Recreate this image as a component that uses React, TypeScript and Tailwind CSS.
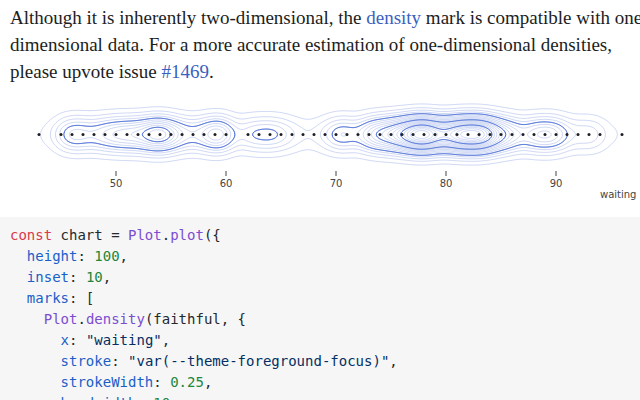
import React from "react";

// faithful.waiting, value -> count
const waiting: [number, number][] = [
  [43, 1], [45, 3], [46, 5], [47, 4], [48, 3], [49, 5], [50, 5], [51, 6], [52, 5], [53, 7],
  [54, 9], [55, 6], [56, 4], [57, 3], [58, 4], [59, 7], [60, 6], [62, 4], [63, 3], [64, 4],
  [65, 3], [66, 2], [67, 1], [68, 1], [69, 2], [70, 4], [71, 5], [72, 1], [73, 7], [74, 6],
  [75, 8], [76, 9], [77, 12], [78, 15], [79, 10], [80, 8], [81, 13], [82, 12], [83, 14], [84, 10],
  [85, 6], [86, 6], [87, 2], [88, 6], [89, 5], [90, 6], [91, 2], [92, 2], [93, 3], [94, 2], [96, 1],
];

const X = (v: number) => 116 + 11 * (v - 50);
const Y0 = 44.5;
const SX = 10.5;
const SY = 12.5;

function density(x: number) {
  let s = 0;
  for (const [v, n] of waiting) {
    const d = x - X(v);
    s += n * Math.exp(-(d * d) / (2 * SX * SX));
  }
  return s;
}

const STEP = 0.5;
const samples: { x: number; f: number }[] = [];
for (let x = 0; x <= 640; x += STEP) samples.push({ x, f: density(x) });
const MAX = Math.max(...samples.map((s) => s.f));

function contour(level: number) {
  const paths: string[] = [];
  let run: { x: number; h: number }[] = [];
  const flush = () => {
    if (run.length > 1) {
      const top = run.map((p) => `${p.x.toFixed(2)},${(Y0 - p.h).toFixed(2)}`);
      const bot = run
        .slice()
        .reverse()
        .map((p) => `${p.x.toFixed(2)},${(Y0 + p.h).toFixed(2)}`);
      paths.push(`M${top.join("L")}L${bot.join("L")}Z`);
    }
    run = [];
  };
  for (let i = 0; i < samples.length; i++) {
    const s = samples[i];
    if (s.f > level) {
      if (run.length === 0 && i > 0) {
        const p = samples[i - 1];
        const t = (level - p.f) / (s.f - p.f);
        run.push({ x: p.x + t * STEP, h: 0 });
      }
      run.push({ x: s.x, h: SY * Math.sqrt(2 * Math.log(s.f / level)) });
    } else if (run.length) {
      const p = samples[i - 1];
      const t = (p.f - level) / (p.f - s.f);
      run.push({ x: p.x + t * STEP, h: 0 });
      flush();
    }
  }
  flush();
  return paths.join("");
}

const thin = Array.from({ length: 19 }, (_, i) => contour((MAX * (i + 1)) / 20));
const thick = [0.25, 0.5, 0.75].map((k) => contour(MAX * k));

function Chart() {
  return (
    <svg width={640} height={120} viewBox="0 0 640 120" className="block">
      {thin.map((d, i) => (
        <path key={"t" + i} d={d} fill="none" stroke="#3b63d3" strokeWidth={0.25} />
      ))}
      {thick.map((d, i) => (
        <path key={"k" + i} d={d} fill="none" stroke="#3b63d3" strokeWidth={1} />
      ))}
      {waiting.map(([v]) => (
        <circle key={v} cx={X(v)} cy={Y0} r={1.5} fill="#1b1e23" />
      ))}
      <g fontFamily="'DejaVu Sans', sans-serif" fontSize={10} fill="#444">
        {[50, 60, 70, 80, 90].map((v) => (
          <g key={v} transform={`translate(${X(v)},0)`}>
            <line y1={81} y2={86} stroke="#444" strokeWidth={1} />
            <text y={97} textAnchor="middle">
              {v}
            </text>
          </g>
        ))}
        <text x={600} y={108}>
          waiting →
        </text>
      </g>
    </svg>
  );
}

const K = "text-[#d73a49]";
const F = "text-[#7c4dd0]";
const P = "text-[#1a5fc8]";
const N = "text-[#22863a]";
const S = "text-[#032f62]";

export default function App() {
  return (
    <div className="w-[640px] h-[400px] overflow-hidden bg-white text-[#1b1e23]">
      <p className="pt-[4px] pl-[10px] h-[90px] whitespace-nowrap text-[19px] leading-[27px] font-['Liberation_Serif',serif]">
        Although it is inherently two-dimensional, the{" "}
        <span className="text-[#3b5fc0]">density</span> mark is compatible with one-
        <br />
        dimensional data. For a more accurate estimation of one-dimensional densities,
        <br />
        please upvote issue <span className="text-[#3b5fc0]">#1469</span>.
      </p>
      <Chart />
      <pre className="mt-[7px] bg-[#f6f6f6] pt-[8px] pl-[10px] h-[200px] text-[14px] leading-[21px] text-[#24292e] font-['DejaVu_Sans_Mono',monospace]">
        <span className={K}>const</span> chart = <span className={F}>Plot</span>.
        <span className={F}>plot</span>({"{"}
        {"\n  "}
        <span className={P}>height</span>: <span className={N}>100</span>,
        {"\n  "}
        <span className={P}>inset</span>: <span className={N}>10</span>,
        {"\n  "}
        <span className={P}>marks</span>: [
        {"\n    "}
        <span className={F}>Plot</span>.<span className={F}>density</span>(faithful, {"{"}
        {"\n      "}
        <span className={P}>x</span>: <span className={S}>"waiting"</span>,
        {"\n      "}
        <span className={P}>stroke</span>:{" "}
        <span className={S}>"var(--theme-foreground-focus)"</span>,
        {"\n      "}
        <span className={P}>strokeWidth</span>: <span className={N}>0.25</span>,
        {"\n      "}
        <span className={P}>bandwidth</span>: <span className={N}>10</span>,
      </pre>
    </div>
  );
}
